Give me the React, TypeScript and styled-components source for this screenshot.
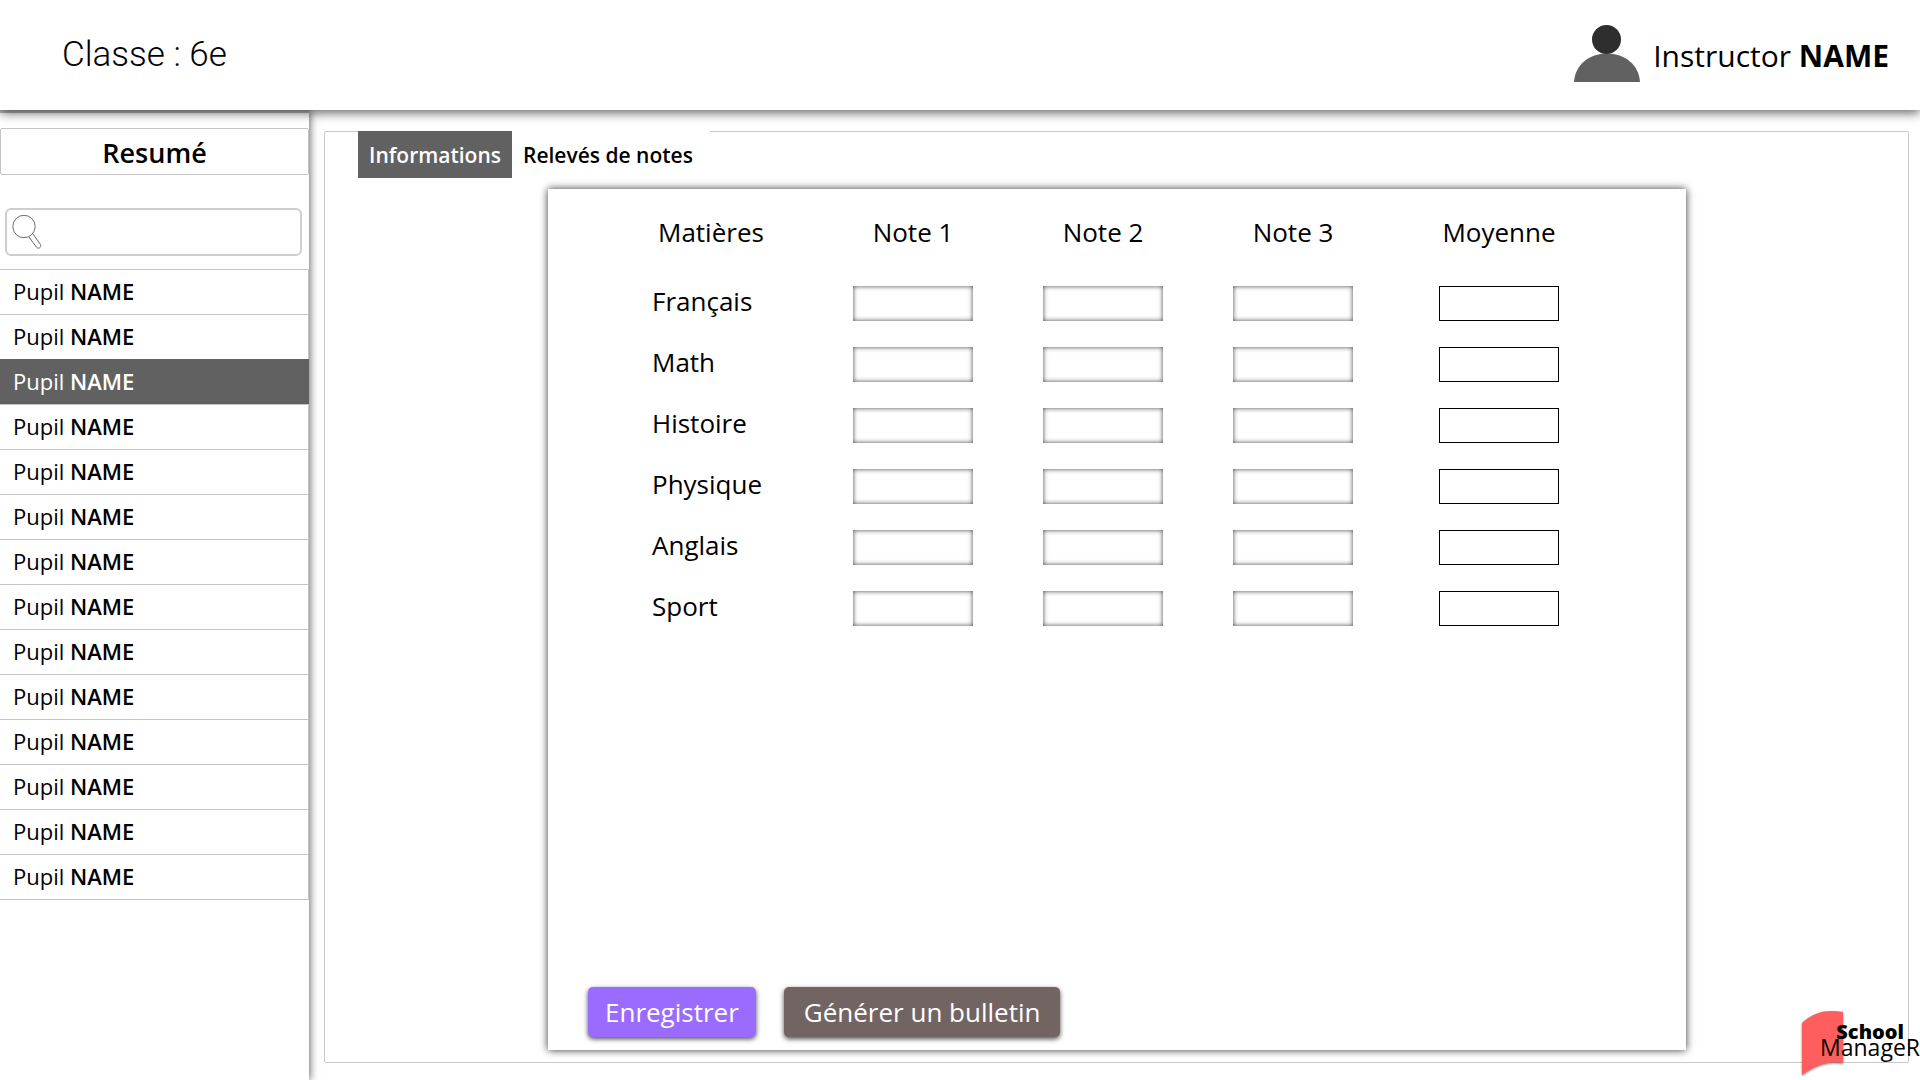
import React from 'react';
import styled, { createGlobalStyle } from 'styled-components';

const GlobalStyle = createGlobalStyle`
  *, *::before, *::after { box-sizing: border-box; }
  body {
    margin: 0;
    background: #fff;
    color: #000;
    font-family: 'Open Sans', 'Noto Sans', sans-serif;
  }
`;

const Page = styled.div`
  position: relative;
  display: flex;
  flex-direction: column;
  min-height: 100vh;
  overflow: hidden;
`;

const Header = styled.header`
  z-index: 2;
  display: flex;
  align-items: center;
  justify-content: space-between;
  height: 110px;
  padding: 0 31px 4px 62px;
  background: #fff;
  box-shadow: 0 3px 10px rgba(0, 0, 0, 0.6);
`;

const ClassTitle = styled.h1`
  margin: 0;
  padding-top: 4px;
  font: 300 35px/40px Roboto, sans-serif;
`;

const Instructor = styled.div`
  display: flex;
  align-items: center;
  gap: 13px;
  font-size: 30px;
  line-height: 40px;
`;

const InstructorName = styled.span`
  padding-top: 6px;
`;

const Body = styled.div`
  display: flex;
  flex: 1;
`;

const Sidebar = styled.aside`
  flex: 0 0 309px;
  min-width: 0;
  padding-top: 15px;
  border-top: 3px solid #bbb;
  background: #fff;
  box-shadow: 1px 0 8px rgba(0, 0, 0, 0.6);
`;

const SummaryTitle = styled.h2`
  margin: 0;
  padding-top: 2px;
  border: 1px solid #c4c4c4;
  border-radius: 2px;
  font-size: 27px;
  font-weight: 600;
  line-height: 43px;
  text-align: center;
`;

const Search = styled.label`
  display: flex;
  align-items: center;
  height: 48px;
  margin: 33px 7px 13px 5px;
  padding: 0 5px;
  border: 2px solid #cfcfcf;
  border-radius: 6px;
`;

const SearchInput = styled.input`
  flex: 1;
  min-width: 0;
  height: 40px;
  border: 0;
  outline: 0;
  background: transparent;
  font: inherit;
  font-size: 22px;
`;

const PupilList = styled.ul`
  margin: 0;
  padding: 0;
  list-style: none;
  border-bottom: 1px solid #c4c4c4;
`;

const PupilButton = styled.button<{ $selected: boolean }>`
  display: block;
  width: 100%;
  height: 45px;
  padding: 0 13px 2px;
  border: 0;
  border-top: 1px solid ${(p) => (p.$selected ? '#616161' : '#c4c4c4')};
  border-right: 1px solid ${(p) => (p.$selected ? '#616161' : '#c4c4c4')};
  background: ${(p) => (p.$selected ? '#616161' : '#fff')};
  color: ${(p) => (p.$selected ? '#fff' : '#000')};
  font: inherit;
  font-size: 22px;
  line-height: 42px;
  text-align: left;
`;

const Semi = styled.strong`
  font-weight: 600;
`;

const Main = styled.main`
  display: flex;
  flex: 1;
  min-width: 0;
  padding: 21px 11px 17px 15px;
`;

const Panel = styled.section`
  display: flex;
  flex: 1;
  flex-direction: column;
  min-width: 0;
  padding-bottom: 12px;
  border: 1px solid #c9c9c9;
  border-radius: 2px;
`;

const Tabs = styled.nav`
  display: flex;
  align-self: flex-start;
  margin: -1px 0 11px 33px;
  padding-right: 6px;
  background: #fff;
`;

const Tab = styled.button<{ $active: boolean }>`
  height: 47px;
  padding: 0 11px;
  border: 0;
  background: ${(p) => (p.$active ? '#616161' : '#fff')};
  color: ${(p) => (p.$active ? '#fff' : '#000')};
  font: inherit;
  font-size: 21px;
  font-weight: 600;
`;

const Card = styled.form`
  display: flex;
  flex: 1;
  flex-direction: column;
  justify-content: space-between;
  margin: 0 222px 0 223px;
  padding: 19px 40px 13px;
  background: #fff;
  box-shadow: 0 0 8px rgba(0, 0, 0, 0.8);
`;

const Grades = styled.table`
  width: 958px;
  margin-left: 64px;
  border-collapse: collapse;
  table-layout: fixed;
  font-size: 26px;
`;

const ColumnHead = styled.th<{ $width: number; $start?: boolean }>`
  width: ${(p) => p.$width}px;
  height: 65px;
  padding: ${(p) => (p.$start ? '0 0 18px 6px' : '0 0 18px')};
  font-weight: inherit;
  line-height: 40px;
  text-align: ${(p) => (p.$start ? 'left' : 'center')};
`;

const RowHead = styled.th`
  height: 61px;
  padding: 0 0 5px;
  font-weight: inherit;
  line-height: 40px;
  text-align: left;
`;

const GradeCell = styled.td`
  padding: 0;
  text-align: center;
`;

const GradeInput = styled.input<{ $average?: boolean }>`
  display: block;
  width: 120px;
  height: 35px;
  margin: 0 auto;
  padding: 0 8px;
  border: ${(p) => (p.$average ? '1px solid #000' : '0')};
  border-radius: 0;
  background: #fff;
  box-shadow: ${(p) => (p.$average ? 'none' : 'inset 0 0 5px rgba(0, 0, 0, 0.75)')};
  font: inherit;
  font-size: 22px;
  text-align: center;
`;

const Actions = styled.div`
  display: flex;
  gap: 28px;
`;

const ActionButton = styled.button<{ $color: string; $pad: number }>`
  height: 50px;
  padding: 0 ${(p) => p.$pad}px;
  border: 0;
  border-radius: 5px;
  background: ${(p) => p.$color};
  box-shadow: 0 2px 5px rgba(0, 0, 0, 0.7);
  color: #fff;
  font: inherit;
  font-size: 26px;
`;

const Brand = styled.a`
  position: absolute;
  right: 0;
  bottom: 0;
  width: 119px;
  height: 70px;
  color: #000;
  text-decoration: none;
`;

const BookMark = styled.svg`
  position: absolute;
  left: 0;
  top: 0;
  overflow: visible;
  filter: drop-shadow(0 1px 1px rgba(0, 0, 0, 0.5));
`;

const BrandText = styled.span`
  position: absolute;
  top: 14px;
  right: 0;
  display: flex;
  flex-direction: column;
`;

const BrandTop = styled.span`
  padding-right: 16px;
  font-size: 20px;
  font-weight: 800;
  line-height: 15px;
  text-align: right;
`;

const BrandBottom = styled.span`
  font-size: 23px;
  line-height: 16px;
`;

const subjects = ['Français', 'Math', 'Histoire', 'Physique', 'Anglais', 'Sport'];
const notes = ['Note 1', 'Note 2', 'Note 3'];
const pupils = Array.from({ length: 14 }, (_, id) => ({ id, first: 'Pupil', last: 'NAME' }));

const Avatar = () => (
  <svg width="66" height="57" viewBox="0 0 66 57" aria-hidden="true">
    <path d="M0 57C1 40 15 28.500 33 28.500S65 40 66 57Z" fill="#616161" />
    <circle cx="32.500" cy="14.500" r="14.500" fill="#2e2e2e" />
  </svg>
);

const Magnifier = () => (
  <svg width="30" height="34" viewBox="0 0 30 34" fill="none" stroke="#6a6a6a" aria-hidden="true">
    <circle cx="12" cy="11.500" r="11.200" />
    <path d="M17 22l7.500 10.200c2 2.300 5.300 0 4-2.700L21 19" />
  </svg>
);

export default function App() {
  const [selected, setSelected] = React.useState(2);
  return (
    <>
      <GlobalStyle />
      <Page>
        <Header>
          <ClassTitle>Classe : 6e</ClassTitle>
          <Instructor>
            <Avatar />
            <InstructorName>
              Instructor <b>NAME</b>
            </InstructorName>
          </Instructor>
        </Header>
        <Body>
          <Sidebar>
            <SummaryTitle>Resumé</SummaryTitle>
            <Search>
              <Magnifier />
              <SearchInput type="search" aria-label="Rechercher" />
            </Search>
            <PupilList>
              {pupils.map((p) => (
                <li key={p.id}>
                  <PupilButton type="button" $selected={p.id === selected} onClick={() => setSelected(p.id)}>
                    {p.first} <Semi>{p.last}</Semi>
                  </PupilButton>
                </li>
              ))}
            </PupilList>
          </Sidebar>
          <Main>
            <Panel>
              <Tabs>
                <Tab type="button" $active>Informations</Tab>
                <Tab type="button" $active={false}>Relevés de notes</Tab>
              </Tabs>
              <Card onSubmit={(e) => e.preventDefault()}>
                <Grades>
                  <thead>
                    <tr>
                      <ColumnHead scope="col" $width={166} $start>Matières</ColumnHead>
                      {notes.map((n) => (
                        <ColumnHead key={n} scope="col" $width={190}>{n}</ColumnHead>
                      ))}
                      <ColumnHead scope="col" $width={222}>Moyenne</ColumnHead>
                    </tr>
                  </thead>
                  <tbody>
                    {subjects.map((s) => (
                      <tr key={s}>
                        <RowHead scope="row">{s}</RowHead>
                        {notes.map((n) => (
                          <GradeCell key={n}>
                            <GradeInput aria-label={`${s}, ${n}`} />
                          </GradeCell>
                        ))}
                        <GradeCell>
                          <GradeInput $average readOnly aria-label={`${s}, Moyenne`} />
                        </GradeCell>
                      </tr>
                    ))}
                  </tbody>
                </Grades>
                <Actions>
                  <ActionButton type="submit" $color="#9b6bff" $pad={17}>Enregistrer</ActionButton>
                  <ActionButton type="button" $color="#736464" $pad={20}>Générer un bulletin</ActionButton>
                </Actions>
              </Card>
            </Panel>
          </Main>
        </Body>
        <Brand href="#">
          <BookMark width="43" height="66" viewBox="0 0 43 66" aria-hidden="true">
            <path d="M1 13C13 2 25-1 42 2V53C28 50 14 55 1 65Z" fill="#ff5e5e" />
          </BookMark>
          <BrandText>
            <BrandTop>School</BrandTop>
            <BrandBottom>ManageR</BrandBottom>
          </BrandText>
        </Brand>
      </Page>
    </>
  );
}
